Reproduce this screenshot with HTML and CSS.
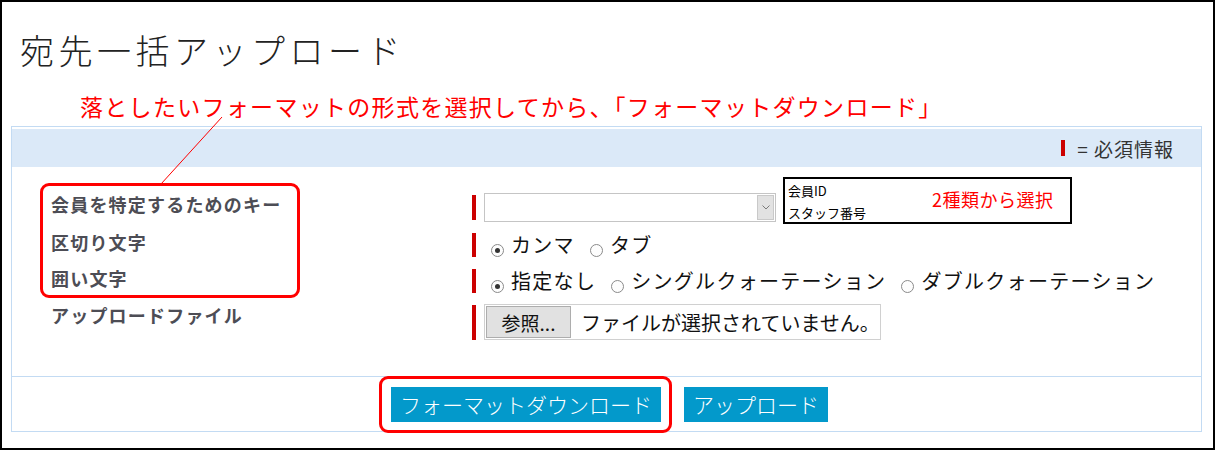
FILE: index.html
```html
<!DOCTYPE html>
<html lang="ja">
<head>
    <meta charset="UTF-8">
    <title>宛先一括アップロード</title>
    <link rel="stylesheet" href="styles.css">
</head>
<body>
    <div class="screen">
        <h1>宛先一括アップロード</h1>
        <p class="note">落としたいフォーマットの形式を選択してから、「フォーマットダウンロード」</p>

        <div class="panel">
            <div class="panel-head">
                <span class="req-mark small"></span>
                <span class="legend">= 必須情報</span>
            </div>

            <div class="rows">
                <div class="row row-select">
                    <div class="label">会員を特定するためのキー</div>
                    <div class="field">
                        <span class="req-mark"></span>
                        <div class="select">
                            <span class="select-arrow">
                                <svg width="8" height="5" viewBox="0 0 8 5"><path d="M0.5 0.5 L4 4 L7.5 0.5" fill="none" stroke="#7a7a7a" stroke-width="1"/></svg>
                            </span>
                        </div>
                    </div>
                </div>
                <div class="row row-radio">
                    <div class="label">区切り文字</div>
                    <div class="field">
                        <span class="req-mark"></span>
                        <label class="option"><span class="radio checked"></span>カンマ</label>
                        <label class="option"><span class="radio"></span>タブ</label>
                    </div>
                </div>
                <div class="row row-radio">
                    <div class="label">囲い文字</div>
                    <div class="field">
                        <span class="req-mark"></span>
                        <label class="option"><span class="radio checked"></span>指定なし</label>
                        <label class="option"><span class="radio"></span>シングルクォーテーション</label>
                        <label class="option"><span class="radio"></span>ダブルクォーテーション</label>
                    </div>
                </div>
                <div class="row row-file">
                    <div class="label">アップロードファイル</div>
                    <div class="field">
                        <span class="req-mark"></span>
                        <div class="file">
                            <span class="file-btn">参照...</span>
                            <span class="file-name">ファイルが選択されていません。</span>
                        </div>
                    </div>
                </div>
            </div>

            <div class="panel-foot">
                <span class="btn">フォーマットダウンロード</span>
                <span class="btn">アップロード</span>
            </div>
        </div>

        <!-- callouts drawn over the form -->
        <svg class="pointer" width="80" height="80" viewBox="0 0 80 80">
            <line x1="70" y1="5" x2="9" y2="72" stroke="#ff0000" stroke-width="1"/>
        </svg>
        <div class="callout callout-labels"></div>
        <div class="callout callout-download"></div>

        <div class="hint-box">
            <div class="hint-list">
                <div>会員ID</div>
                <div>スタッフ番号</div>
            </div>
            <div class="hint-text">2種類から選択</div>
        </div>
    </div>
</body>
</html>
```

FILE: styles.css
```css
body {
    margin: 0;
    background: #fff;
    font-family: "Noto Sans CJK JP", sans-serif;
    color: #222;
}
.screen {
    position: relative;
    width: 1215px;
    height: 450px;
    box-sizing: border-box;
    border: 2px solid #000;
    padding: 0 11px 0 9px;
    overflow: hidden;
}
h1 {
    margin: 31px 0 0 9px;
    font-size: 34px;
    line-height: 34px;
    font-weight: 300;
    letter-spacing: 4.5px;
    color: #222;
}
.note {
    margin: 28px 0 0 69px;
    font-size: 23px;
    line-height: 23px;
    letter-spacing: 1.3px;
    color: #ff0000;
}

/* panel */
.panel {
    margin-top: 8px;
    border: 1px solid #c3dbf3;
}
.panel-head {
    margin-top: 2px;
    height: 38px;
    background: #dbe9f8;
    display: flex;
    justify-content: flex-end;
    align-items: center;
    padding-right: 27px;
}
.legend {
    margin-left: 12px;
    font-size: 19px;
    color: #333;
    letter-spacing: 1px;
}
.req-mark {
    display: block;
    width: 4px;
    flex-shrink: 0;
    align-self: stretch;
    background: #cc0000;
}
.req-mark.small {
    align-self: auto;
    height: 16px;
}

/* form rows */
.rows {
    display: grid;
    row-gap: 11px;
    padding: 26px 0 36px 39px;
}
.row {
    display: grid;
    grid-template-columns: 421px auto;
}
.row-select { height: 29px; }
.row-radio { height: 24px; }
.row-file { height: 36px; }
.row-radio + .row-radio { margin-top: 1px; }
.label {
    font-size: 18px;
    line-height: 22px;
    font-weight: bold;
    letter-spacing: 1.2px;
    color: #4d4d55;
}
.row-radio .label { margin-top: -2px; }
.field {
    display: flex;
    align-items: center;
}
.row-select .req-mark { margin: 2px 0; }
.row-file .req-mark { margin: 1px 0 0; }

.select {
    margin-left: 8px;
    width: 292px;
    height: 29px;
    box-sizing: border-box;
    border: 1px solid #c5c5c5;
    display: flex;
    justify-content: flex-end;
    padding: 1px;
}
.select-arrow {
    width: 17px;
    box-sizing: border-box;
    background: #e2e2e2;
    border: 1px solid #c9c9c9;
    display: flex;
    align-items: center;
    justify-content: center;
}

.option {
    display: flex;
    align-items: center;
    margin-left: 7px;
    margin-right: 8px;
    font-size: 20px;
    line-height: 20px;
    letter-spacing: 1.3px;
    color: #111;
    white-space: nowrap;
}
.req-mark + .option { margin-left: 15px; }
.radio {
    position: relative;
    width: 13px;
    height: 13px;
    box-sizing: border-box;
    border-radius: 50%;
    border: 1px solid #8a8a8a;
    background: #fdfdfd;
    margin: 10px 7px 0 0;
}
.radio.checked::after {
    content: "";
    position: absolute;
    left: 3px;
    top: 3px;
    width: 5px;
    height: 5px;
    border-radius: 50%;
    background: #333;
}

.file {
    margin-left: 8px;
    width: 397px;
    height: 36px;
    box-sizing: border-box;
    border: 1px solid #d0d0d0;
    padding: 1px;
    display: flex;
    align-items: stretch;
}
.file-btn {
    width: 85px;
    flex-shrink: 0;
    box-sizing: border-box;
    border: 1px solid #adadad;
    background: #e1e1e1;
    display: flex;
    align-items: center;
    justify-content: center;
    font-size: 19px;
    color: #111;
}
.file-name {
    margin-left: 10px;
    display: flex;
    align-items: center;
    font-size: 20px;
    color: #111;
    white-space: nowrap;
}

/* footer buttons */
.panel-foot {
    border-top: 1px solid #c3dbf3;
    padding: 10px 0 9px 6px;
    display: flex;
    justify-content: center;
    gap: 23px;
}
.btn {
    height: 35px;
    line-height: 35px;
    padding: 0 9px;
    background: #0399cb;
    color: #fff;
    font-size: 21px;
    font-weight: 300;
}

/* red callouts */
.pointer {
    position: absolute;
    left: 150px;
    top: 110px;
}
.callout {
    position: absolute;
    box-sizing: border-box;
    border: 3px solid #ff0000;
    border-radius: 9px;
}
.callout-labels {
    left: 38px;
    top: 181px;
    width: 260px;
    height: 115px;
}
.callout-download {
    left: 377px;
    top: 374px;
    width: 293px;
    height: 57px;
}

.hint-box {
    position: absolute;
    left: 781px;
    top: 175px;
    width: 289px;
    height: 47px;
    box-sizing: border-box;
    border: 2px solid #000;
    background: #fff;
    display: flex;
    align-items: center;
}
.hint-list {
    width: 147px;
    box-sizing: border-box;
    padding-left: 3px;
    align-self: flex-start;
    padding-top: 1px;
    font-size: 13px;
    line-height: 22px;
    color: #000;
}
.hint-text {
    font-size: 18px;
    letter-spacing: 0.5px;
    color: #ff0000;
    margin-top: -4px;
}
```
